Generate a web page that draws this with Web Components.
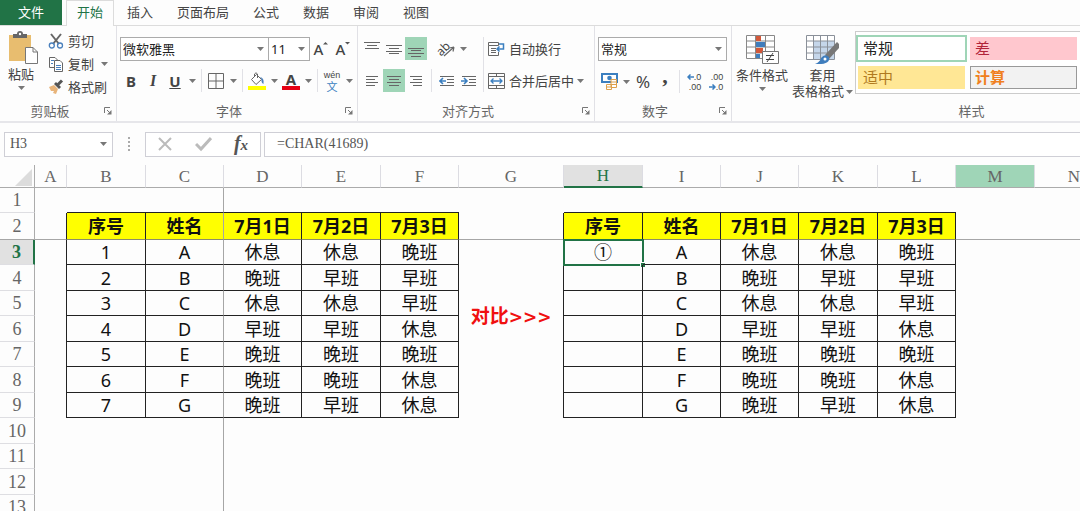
<!DOCTYPE html>
<html lang="zh-CN">
<head>
<meta charset="utf-8">
<meta name="viewport" content="width=device-width, initial-scale=1">
<title>排班表</title>
<style>
html, body { margin: 0; height: 100%; background: #fdfdfd; overflow: hidden; }
body { font: 13px/18px "Noto Sans", "Noto Sans CJK SC", sans-serif; color: #444; }
</style>
</head>
<body>
<excel-app></excel-app>

<script>
const RESET = `
*, *::before, *::after { box-sizing: border-box; }
button, input, select { margin: 0; padding: 0; border: 0; border-radius: 0; background: none; font: inherit; color: inherit; outline: 0; }
svg { display: block; }
`;

const lines = (rows) => rows.map(([x1, x2, y]) => `M${x1} ${y}.5H${x2}`).join('');

const ICONS = {
  arrow: [7, 4, `<path d="M0 0H7L3.5 4Z" fill="#777"/>`],
  launcher: [8, 8, `<path d="M.5 6V.5H6M3 3L6 6" fill="none" stroke="#777"/><path d="M7.5 3V7.5H3Z" fill="#777"/>`],
  paste: [30, 34, `<path d="M1 4H23V30H1Z" fill="#e8bd6f"/><path d="M5 3H9Q9 0 12 0T15 3H19V7H5Z" fill="#666"/><circle cx="12" cy="3" r="1.2" fill="#fff"/><path d="M17.5 16.5H25L29.5 21V32.5H17.5Z" fill="#fff" stroke="#777"/><path d="M25 16.5V21H29.5" fill="none" stroke="#777"/>`],
  cut: [16, 16, `<path d="M3 1L11 11M13 1L5 11" fill="none" stroke="#666" stroke-width="2"/><circle cx="3.8" cy="12.5" r="2.5" fill="none" stroke="#4a80bd" stroke-width="1.3"/><circle cx="12" cy="12.5" r="2.5" fill="none" stroke="#4a80bd" stroke-width="1.3"/>`],
  copy: [16, 16, `<path d="M1.5 1.5H7L9.5 4V11.5H1.5Z" fill="#fff" stroke="#666"/><path d="M6.5 4.5H12L14.500 7V15.500H6.500Z" fill="#fff" stroke="#666"/><path d="M3 4.500H6M3 7.500H5M8 9.500H13M8 11.500H13M8 13.500H13" stroke="#4a80bd"/>`],
  brush: [16, 16, `<path d="M1 8L6 6L10 10L8 15L5 14L6 12L3 12Z" fill="#e8b47a"/><path d="M6 5L8 3L13 8L11 10Z" fill="#555"/><path d="M9.5 6L14 1.5" stroke="#555" stroke-width="3"/>`],
  grow: [6, 16, `<path d="M1 3.500L3.500 1L6 3.500Z" fill="#555"/>`],
  shrink: [6, 16, `<path d="M1 1L3.500 3.500L6 1Z" fill="#555"/>`],
  borders: [16, 16, `<path d="M.5 .5H15.500V15.500H.5ZM8 .5V15.500M.5 8H15.500" fill="none" stroke="#666"/>`],
  fill: [18, 18, `<path d="M3.500 7.500L8.500 2.500L13.500 7.500L8 12.500Z" fill="#fff" stroke="#666"/><path d="M6.500 5V2Q8 -.5 9.500 2V6" fill="none" stroke="#666"/><path d="M12 5Q16.500 6 15.500 12Q13 11 13.500 7Z" fill="#4a80bd"/><path d="M0 14H18V18H0Z" fill="#ff0"/>`],
  bar: [18, 4, `<path d="M0 0H18V4H0Z" fill="#e60012"/>`],
  top: [16, 16, `<path d="${lines([[0,16,1],[3,13,4],[1,15,7]])}" stroke="#666"/>`],
  middle: [16, 16, `<path d="${lines([[0,16,4],[3,13,7],[0,16,10],[3,13,12]])}" stroke="#666"/>`],
  bottom: [16, 16, `<path d="${lines([[0,16,7],[3,13,9],[0,16,12],[3,13,15]])}" stroke="#666"/>`],
  left: [12, 10, `<path d="${lines([[0,12,0],[0,9,3],[0,12,6],[0,9,9]])}" stroke="#666"/>`],
  center: [14, 10, `<path d="${lines([[0,14,0],[2,12,3],[0,14,6],[2,12,9]])}" stroke="#666"/>`],
  right: [12, 10, `<path d="${lines([[0,12,0],[3,12,3],[0,12,6],[3,12,9]])}" stroke="#666"/>`],
  orient: [18, 16, `<path d="M6 15L16 6M16 6L11.500 7M16 6L15 10.500" fill="none" stroke="#666" stroke-width="1.200"/>`],
  outdent: [16, 10, `<path d="${lines([[1,15,0],[8,15,3],[8,15,6],[1,15,9]])}" stroke="#666"/><path d="M7 5H1M4 2L1 5L4 8" fill="none" stroke="#3b7fc0" stroke-width="1.600"/>`],
  indent: [16, 10, `<path d="${lines([[1,15,0],[8,15,3],[8,15,6],[1,15,9]])}" stroke="#666"/><path d="M0 5H6M3 2L6 5L3 8" fill="none" stroke="#3b7fc0" stroke-width="1.600"/>`],
  wrap: [17, 16, `<path d="M.5 1.500H10.500V4.500H.5ZM.5 4.500V14.500H10.500V11M3 7.500H8M3 9.500H8M3 11.500H8" fill="none" stroke="#666"/><path d="M11 3H15.500V8H9M11.500 5.500L9 8L11.500 10.500" fill="none" stroke="#3b7fc0" stroke-width="1.500"/>`],
  merge: [17, 16, `<path d="M.5 .5H16.500V15.500H.5ZM.5 3.500H16.500M.5 12.500H16.500M8.500 .5V3M8.500 13V15.500" fill="none" stroke="#666"/><path d="M3 8H14M5.500 5.500L3 8L5.500 10.500M11.500 5.500L14 8L11.500 10.500" fill="none" stroke="#3b7fc0" stroke-width="1.300"/>`],
  money: [17, 17, `<path d="M1 1H16V9H1Z" fill="#fff" stroke="#3b7fc0" stroke-width="2"/><circle cx="8.500" cy="5" r="2.300" fill="#3b7fc0"/><path d="M10 6.500H15.500V14.500H10ZM10 9H15.500M10 11.500H15.500M5.500 11.500H10.500V16.500H5.500ZM5.500 14H10.500" fill="#fff" stroke="#dda04c"/>`],
  decArrow: [7, 6, `<path d="M7 3H1M3.500 .5L1 3L3.500 5.500" fill="none" stroke="#3b7fc0" stroke-width="1.500"/>`],
  incArrow: [7, 6, `<path d="M0 3H6M3.500 .5L6 3L3.500 5.500" fill="none" stroke="#3b7fc0" stroke-width="1.500"/>`],
  cond: [33, 31, `<path d="M.5 1.500H28.500V24.500H.5ZM.5 7H28.500M.5 13H28.500M.5 19H28.500M9.500 1.500V24M19.500 1.500V24" fill="#fff" stroke="#888"/><path d="M10 2H15V7H10ZM10 14H17V19H10Z" fill="#d3583a"/><path d="M10 8H19V13H10ZM10 20H14V24H10Z" fill="#3f7dbd"/><path d="M16.500 17.500H32.500V29.500H16.500Z" fill="#fff" stroke="#777"/><path d="M20 21.500H28M20 25.500H28M27 19L21 28" stroke="#444"/>`],
  tablefmt: [33, 32, `<path d="M.5 1.500H28.500V25.500H.5Z" fill="#fff"/><path d="M8 7H28V25H8Z" fill="#c5d6ea"/><path d="M.5 1.500H28.500V25.500H.5ZM.5 7H28.500M.5 13H28.500M.5 19H28.500M7.500 1.500V25M14.500 1.500V25M21.500 1.500V25" fill="none" stroke="#8a9099"/><path d="M19 21L31 8L33 10V14L23 25Z" fill="#777"/><path d="M9 30Q14 28 15 24Q19 19 23 23Q25 31 9 30Z" fill="#3f7dbd"/><circle cx="19" cy="25" r="1.500" fill="#fff"/>`],
  cancel: [16, 16, `<path d="M2 2L14 14M14 2L2 14" stroke="#bbb" stroke-width="2"/>`],
  accept: [17, 16, `<path d="M1 8L6 13L16 2" fill="none" stroke="#bbb" stroke-width="3"/>`],
  dots: [2, 14, `<path d="M0 0H2V2H0ZM0 4H2V6H0ZM0 8H2V10H0ZM0 12H2V14H0Z" fill="#aaa"/>`],
  corner: [17, 17, `<path d="M17 0V17H0Z" fill="#dcdcdc"/>`]
};

function icon(name) {
  const [w, h, body] = ICONS[name];
  return `<svg width="${w}" height="${h}" viewBox="0 0 ${w} ${h}" aria-hidden="true">${body}</svg>`;
}

class Base extends HTMLElement {
  connectedCallback() {
    if (this.shadowRoot) return;
    this.attachShadow({ mode: 'open' }).innerHTML = `<style>${RESET}${this.css()}</style>${this.html()}`;
  }
}

customElements.define('ui-icon', class extends Base {
  css() { return `:host { display: block; flex: none; }`; }
  html() { return icon(this.getAttribute('name')); }
});

/* A ribbon command: small, wide (icon + text), tall or a drop arrow. */
customElements.define('tool-button', class extends Base {
  css() {
    return `
    :host { display: block; flex: none; }
    button { display: flex; align-items: center; justify-content: center; width: 22px; height: 23px; white-space: nowrap; }
    button:hover { background: #e4f1ea; }
    :host([active]) button { background: #9fd5b7; }
    :host([drop]) button { width: 12px; }
    :host([wide]) button { width: auto; gap: 4px; }
    :host([tall]) button { flex-direction: column; width: auto; height: auto; }
    `;
  }
  html() {
    const label = this.getAttribute('label');
    return `<button type="button"${label ? ` aria-label="${label}"` : ''}><slot>${icon('arrow')}</slot></button>`;
  }
});

customElements.define('tool-rule', class extends Base {
  css() { return `:host { display: block; flex: none; width: 1px; align-self: stretch; background: #e1e1e6; }`; }
  html() { return ''; }
});

customElements.define('drop-list', class extends Base {
  css() {
    return `
    :host { display: grid; align-items: center; height: 24px; border: 1px solid #ababab; background: #fff; color: #222; }
    select, ui-icon { grid-area: 1 / 1; }
    select { appearance: none; width: 100%; height: 22px; padding-left: 2px; }
    ui-icon { justify-self: end; margin-right: 4px; pointer-events: none; }
    `;
  }
  html() {
    return `<select aria-label="${this.getAttribute('label')}"><option>${this.getAttribute('value')}</option></select><ui-icon name="arrow"></ui-icon>`;
  }
});

customElements.define('ribbon-tabs', class extends Base {
  css() {
    return `
    :host { display: flex; height: 26px; border-bottom: 1px solid #dcdcdc; }
    .file { width: 62px; padding-bottom: 1px; background: #217346; color: #fff; }
    nav { display: flex; margin-left: 3px; }
    nav button { margin: 0 1px -1px; padding: 0 10px 4px; border: 1px solid transparent; border-width: 1px 1px 0; white-space: nowrap; }
    nav button[aria-selected=true] { background: #fdfdfd; border-color: #dcdcdc; color: #217346; }
    `;
  }
  html() {
    const tabs = ['开始', '插入', '页面布局', '公式', '数据', '审阅', '视图'];
    return `<button class="file" type="button">文件</button><nav role="tablist">${
      tabs.map((t, i) => `<button type="button" role="tab" aria-selected="${i === 0}">${t}</button>`).join('')}</nav>`;
  }
});

customElements.define('ribbon-group', class extends Base {
  css() {
    return `
    :host { display: flex; flex-direction: column; flex: none; border-right: 1px solid #e1e1e6; }
    .body { flex: 1; }
    footer { display: flex; align-items: center; height: 18px; margin-bottom: 1px; color: #666; }
    footer span { flex: 1; text-align: center; }
    footer button { width: 16px; height: 16px; display: grid; place-items: center; }
    `;
  }
  html() {
    const label = this.getAttribute('label');
    return `<div class="body"><slot></slot></div><footer><span>${label}</span><button type="button" aria-label="${label}设置">${icon('launcher')}</button></footer>`;
  }
});

customElements.define('style-swatch', class extends Base {
  css() {
    return `
    :host { display: block; }
    button { display: block; width: 100%; height: 23px; padding: 0 0 2px 5px; text-align: left; font-size: 15px; line-height: 20px; background: var(--fill, #fff); color: var(--ink, #222); }
    :host([selected]) button { outline: 2px solid #9fd5b7; }
    :host([boxed]) button { border: 1px solid #999; padding-left: 4px; font-weight: bold; }
    `;
  }
  html() { return `<button type="button"><slot></slot></button>`; }
});

customElements.define('excel-ribbon', class extends Base {
  css() {
    return `
    :host { display: flex; height: 97px; overflow: hidden; border-bottom: 2px solid #e6e6ea; }
    .row { display: flex; align-items: center; height: 23px; }
    .rows { display: grid; gap: 9px; padding-top: 11px; }
    .clip { width: 117px; } .font { width: 241px; } .align { width: 237px; } .number { width: 137px; } .styles { width: 496px; }
    .flex { display: flex; }
    .clip .flex { padding: 3px 0 0 4px; }
    .paste { width: 44px; padding-top: 2px; }
    .paste ui-icon:last-child, .big ui-icon:last-child { margin-top: 3px; }
    .paste ui-icon:first-child { margin-left: 4px; }
    .copy-drop { margin-left: 4px; }
    .font .rows { padding-left: 3px; }
    .lists { display: flex; }
    .lists drop-list { width: 149px; } .lists drop-list + drop-list { width: 42px; margin-left: -1px; }
    .letter { font: bold 15px/18px "Noto Sans", sans-serif; color: #444; }
    .i { font-family: "Liberation Serif", serif; font-style: italic; font-size: 16px; }
    .u { text-decoration: underline; }
    .size { display: flex; align-items: center; font-size: 15px; font-weight: 500; }
    .size ui-icon { margin-left: -1px; }
    .colour { display: grid; justify-items: center; font: bold 15px/14px "Noto Sans", sans-serif; }
    .pinyin { display: grid; justify-items: center; font: 9px/10px "Liberation Sans", sans-serif; }
    .pinyin b { color: #3b7fc0; font: 11px/12px "Noto Sans CJK SC", sans-serif; }
    .ab { font-size: 12px; line-height: 16px; transform: rotate(-45deg); margin-right: -12px; }
    .alignment { display: flex; padding-left: 3px; }
    .alignment > tool-rule { margin-top: 11px; margin-right: 4px; }
    .left { width: 122px; }
    .gap { margin-left: 8px; }
    .thin { margin: 0 3px; }
    .wide { margin: 0 4px; }
    .number .rows { padding: 11px 4px 0 3px; }
    .symbol { font-size: 17px; }
    .comma { font: bold 22px/10px "Liberation Serif", serif; padding-bottom: 12px; }
    .places { display: grid; font: 9px/10px "Liberation Sans", sans-serif; justify-items: end; }
    .places span { display: flex; align-items: center; }
    .big { padding-top: 8px; }
    .big.cond { width: 56px; margin-left: 4px; } .big.table { width: 63px; }
    .big ui-icon:first-child { margin-bottom: 1px; }
    .two { line-height: 16px; display: grid; justify-items: center; }
    .two span { display: flex; align-items: center; gap: 2px; }
    .gallery { flex: 1; display: grid; grid-template-columns: 107px 107px; gap: 6px 5px; height: 63px; margin-top: 5px; padding: 5px 2px; border: 1px solid #ccc; background: #fff; }
    `;
  }
  html() {
    const I = (n) => `<ui-icon name="${n}"></ui-icon>`;
    const B = (label, body, attrs = '') => `<tool-button label="${label}" ${attrs}>${body}</tool-button>`;
    const drop = (label) => `<tool-button drop label="${label}"></tool-button>`;
    return `
    <ribbon-group class="clip" label="剪贴板"><div class="flex">
      <tool-button tall class="paste">${I('paste')}<span>粘贴</span>${I('arrow')}</tool-button>
      <div>
        <div class="row"><tool-button wide>${I('cut')}<span>剪切</span></tool-button></div>
        <div class="row"><tool-button wide>${I('copy')}<span>复制</span></tool-button><tool-button drop class="copy-drop" label="复制选项"></tool-button></div>
        <div class="row"><tool-button wide>${I('brush')}<span>格式刷</span></tool-button></div>
      </div></div>
    </ribbon-group>
    <ribbon-group class="font" label="字体"><div class="rows">
      <div class="row">
        <div class="lists"><drop-list label="字体" value="微软雅黑"></drop-list><drop-list label="字号" value="11"></drop-list></div>
        ${B('增大字号', `<span class="size">A${I('grow')}</span>`, 'class="thin-start"')}
        ${B('减小字号', `<span class="size">A${I('shrink')}</span>`)}
      </div>
      <div class="row">
        ${B('加粗', '<span class="letter">B</span>')}${B('倾斜', '<span class="letter i">I</span>')}${B('下划线', '<span class="letter u">U</span>')}${drop('下划线样式')}
        <tool-rule class="thin"></tool-rule>
        ${B('边框', I('borders'))}${drop('边框样式')}<tool-rule class="thin"></tool-rule>
        ${B('填充颜色', I('fill'))}${drop('更多填充颜色')}
        ${B('字体颜色', `<span class="colour">A${I('bar')}</span>`)}${drop('更多字体颜色')}
        <tool-rule class="thin"></tool-rule>
        ${B('拼音', '<span class="pinyin">wén<b>文</b></span>')}${drop('拼音选项')}
      </div></div>
    </ribbon-group>
    <ribbon-group class="align" label="对齐方式"><div class="alignment">
      <div class="rows left">
        <div class="row">${B('顶端对齐', I('top'))}${B('垂直居中', I('middle'))}${B('底端对齐', I('bottom'), 'active')}
          ${B('方向', `<span class="ab">ab</span>${I('orient')}`, 'class="gap"')}${drop('方向选项')}</div>
        <div class="row">${B('左对齐', I('left'))}${B('居中', I('center'), 'active')}${B('右对齐', I('right'))}
          <tool-rule class="wide"></tool-rule>${B('减少缩进量', I('outdent'))}${B('增加缩进量', I('indent'))}</div>
      </div>
      <tool-rule></tool-rule>
      <div class="rows">
        <div class="row"><tool-button wide>${I('wrap')}<span>自动换行</span></tool-button></div>
        <div class="row"><tool-button wide>${I('merge')}<span>合并后居中</span></tool-button>${drop('合并选项')}</div>
      </div></div>
    </ribbon-group>
    <ribbon-group class="number" label="数字"><div class="rows">
      <drop-list label="数字格式" value="常规"></drop-list>
      <div class="row">
        ${B('会计数字格式', I('money'))}${drop('会计格式选项')}
        ${B('百分比样式', '<span class="symbol">%</span>')}${B('千位分隔样式', '<span class="comma">,</span>')}
        <tool-rule class="thin"></tool-rule>
        ${B('增加小数位数', `<span class="places"><span>${I('decArrow')}.0</span><span>.00</span></span>`)}
        ${B('减少小数位数', `<span class="places"><span>.00</span><span>${I('incArrow')}.0</span></span>`)}
      </div></div>
    </ribbon-group>
    <ribbon-group class="styles" label="样式"><div class="flex">
      <tool-button tall class="big cond">${I('cond')}<span>条件格式</span>${I('arrow')}</tool-button>
      <tool-button tall class="big table">${I('tablefmt')}<span class="two"><span>套用</span><span>表格格式${I('arrow')}</span></span></tool-button>
      <div class="gallery">
        <style-swatch selected>常规</style-swatch>
        <style-swatch style="--fill:#ffc7ce;--ink:#b0233a">差</style-swatch>
        <style-swatch style="--fill:#ffe795;--ink:#b07a1e">适中</style-swatch>
        <style-swatch boxed style="--fill:#f2f2f2;--ink:#f08020">计算</style-swatch>
      </div></div>
    </ribbon-group>`;
  }
});

customElements.define('formula-bar', class extends Base {
  css() {
    return `
    :host { display: flex; align-items: center; height: 42px; padding-left: 4px; font: 14px/20px "Liberation Serif", serif; color: #555; }
    .box { display: flex; align-items: center; height: 25px; border: 1px solid #cfcfd6; background: #fff; }
    .name { width: 109px; }
    .name input { flex: 1; min-width: 0; padding-left: 5px; }
    .name tool-button { margin-right: 3px; }
    .dots { width: 32px; display: grid; place-items: center; }
    .keys { width: 116px; justify-content: space-around; }
    .fx { font: italic bold 20px/22px "Liberation Serif", serif; }
    .fx sub { font-size: 15px; vertical-align: baseline; }
    .formula { flex: 1; margin-left: 3px; border-right: 0; }
    .formula input { width: 100%; padding-left: 12px; }
    `;
  }
  html() {
    return `
    <div class="box name"><input aria-label="名称框" value="H3"><tool-button drop label="名称列表"></tool-button></div>
    <span class="dots">${icon('dots')}</span>
    <div class="box keys"><tool-button label="取消">${icon('cancel')}</tool-button><tool-button label="输入">${icon('accept')}</tool-button><tool-button label="插入函数"><span class="fx">f<sub>x</sub></span></tool-button></div>
    <div class="box formula"><input aria-label="编辑栏" value="=CHAR(41689)"></div>`;
  }
});

customElements.define('sheet-grid', class extends Base {
  css() {
    return `
    :host { display: block; flex: 1; min-height: 0; overflow: hidden; }
    table { table-layout: fixed; width: 0; border-collapse: separate; border-spacing: 0; text-align: center; }
    th, td { padding: 0; white-space: nowrap; }
    td { font-size: 18px; line-height: 20px; color: #111; padding: 0 1px 1px 0; position: relative; }
    th { font: 18px/20px "Liberation Serif", serif; color: #666; }
    thead tr { height: 23px; }
    thead th { font-size: 17px; border-right: 1px solid #dcdce2; border-bottom: 1px solid #ababab; padding-top: 2px; }
    thead .corner { border-right-color: #ababab; }
    .corner svg { margin-left: 15px; }
    tbody th { border-right: 1px solid #ababab; border-bottom: 1px solid #dedee2; }
    tr.odd { height: 25px; } tr.even { height: 26px; } tr.second { height: 27px; }
    thead .current { background: #e1e1e1; color: #217346; border-bottom: 2px solid #217346; padding-top: 1px; }
    tbody .current { background: #e1e1e1; color: #217346; border-right: 2px solid #217346; font-weight: bold; }
    thead .hover { background: #9fd5b7; }
    .line-r, .frozen-col { border-right: 1px solid #222; padding-right: 0; }
    .line-b, .frozen-row { border-bottom: 1px solid #222; padding-bottom: 0; }
    .head { background: #ff0; font-weight: bold; }
    .frozen-col { border-right-color: #a6a6a6; }
    .frozen-row { border-bottom-color: #a6a6a6; }
    td.head.frozen-row { border-bottom-color: #8c8c6a; }
    .compare { font-weight: bold; color: #f01010; font-size: 19px; }
    .chevrons { font: bold 17px/20px "DejaVu Sans", sans-serif; }
    .cursor { position: absolute; inset: -1px -2px -2px -1px; border: 2px solid #217346; pointer-events: none; }
    .cursor::after { content: ""; position: absolute; right: -3px; bottom: -3px; width: 5px; height: 5px; background: #217346; border: 1px solid #fff; border-width: 1px 0 0 1px; }
    `;
  }
  html() {
    const cols = [['A', 32], ['B', 79], ['C', 78], ['D', 78], ['E', 79], ['F', 78], ['G', 105], ['H', 79], ['I', 78], ['J', 78], ['K', 79], ['L', 78], ['M', 79], ['N', 79]];
    const X = '休息', W = '晚班', Z = '早班';
    const shifts = [[X, X, W], [W, Z, Z], [X, X, Z], [Z, Z, X], [W, W, W], [W, W, X], [W, Z, X]];
    const heads = ['序号', '姓名', '7月1日', '7月2日', '7月3日'];
    const value = (c, r) => {
      const left = c >= 1 && c <= 5, k = left ? c - 1 : c - 7;
      if (r < 2 || r > 9 || k < 0 || k > 4) return '';
      if (r === 2) return heads[k];
      if (k === 0) return left ? String(r - 2) : (r === 3 ? '①' : '');
      if (k === 1) return 'ABCDEFG'[r - 3];
      return shifts[r - 3][k - 2];
    };
    const cell = (c, r) => {
      if (c === 6 && r > 3 && r < 9) return '';
      const inTable = (c >= 1 && c <= 5) || (c >= 7 && c <= 11);
      const cls = [];
      if (r >= 2 && r <= 9 && c <= 11) cls.push('line-r');
      if (inTable && r >= 1 && r <= 9) cls.push('line-b');
      if (inTable && r === 2) cls.push('head');
      if (c === 2) cls.push('frozen-col');
      if (r === 2) cls.push('frozen-row');
      if (c === 6 && r === 3) return `<td class="line-r compare" rowspan="6">对比<span class="chevrons">&gt;&gt;&gt;</span></td>`;
      return `<td class="${cls.join(' ')}">${value(c, r)}${c === 7 && r === 3 ? '<span class="cursor"></span>' : ''}</td>`;
    };
    const mark = (name) => name === 'H' ? ' class="current"' : name === 'M' ? ' class="hover"' : '';
    let rows = '';
    for (let r = 1; r <= 13; r++) {
      const cls = r === 3 ? 'current' : r === 2 ? 'frozen-row' : '';
      rows += `<tr class="${r === 2 ? 'second' : r % 2 ? 'odd' : 'even'}"><th scope="row" class="${cls}">${r}</th>${cols.map((_, c) => cell(c, r)).join('')}</tr>`;
    }
    return `<table><colgroup><col style="width:35px">${cols.map(([, w]) => `<col style="width:${w}px">`).join('')}</colgroup>
      <thead><tr><th class="corner">${icon('corner')}</th>${cols.map(([n]) => `<th scope="col"${mark(n)}>${n}</th>`).join('')}</tr></thead>
      <tbody>${rows}</tbody></table>`;
  }
});

customElements.define('excel-app', class extends Base {
  css() { return `:host { display: flex; flex-direction: column; height: 100vh; background: #fdfdfd; overflow: hidden; }`; }
  html() { return `<ribbon-tabs></ribbon-tabs><excel-ribbon></excel-ribbon><formula-bar></formula-bar><sheet-grid></sheet-grid>`; }
});
</script>
</body>
</html>
